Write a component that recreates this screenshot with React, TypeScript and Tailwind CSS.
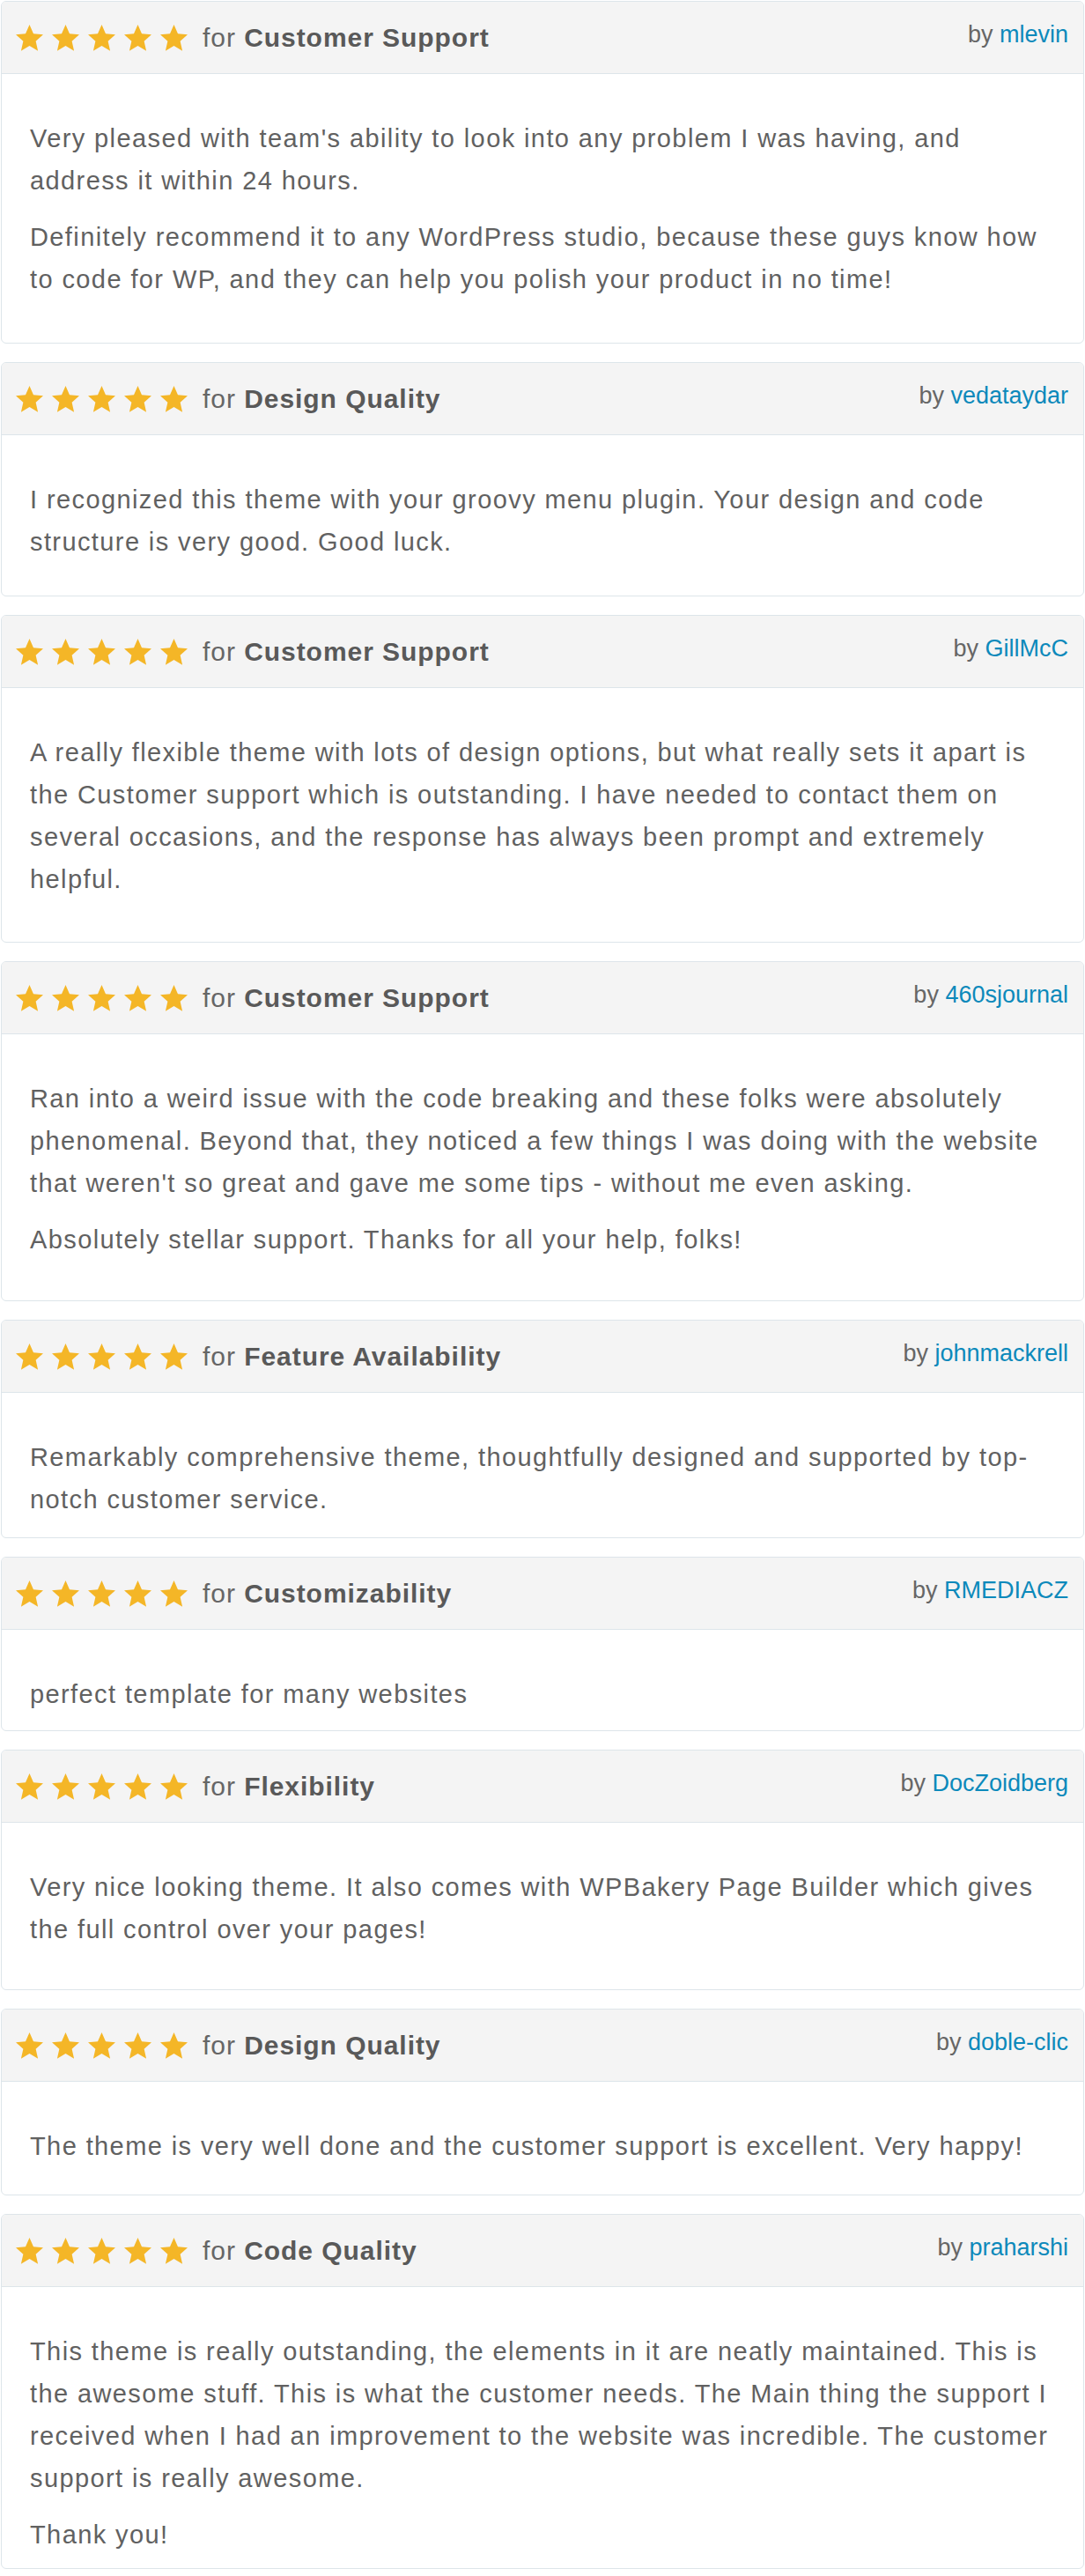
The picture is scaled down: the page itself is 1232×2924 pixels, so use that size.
import React from 'react'

type Review = {
  category: string
  author: string
  paragraphs: string[]
  pb: string
}

const reviews: Review[] = [
  {
    category: 'Customer Support',
    author: 'mlevin',
    paragraphs: [
      "Very pleased with team's ability to look into any problem I was having, and address it within 24 hours.",
      'Definitely recommend it to any WordPress studio, because these guys know how to code for WP, and they can help you polish your product in no time!',
    ],
    pb: 'pb-[48px]',
  },
  {
    category: 'Design Quality',
    author: 'vedataydar',
    paragraphs: [
      'I recognized this theme with your groovy menu plugin. Your design and code structure is very good. Good luck.',
    ],
    pb: 'pb-[37px]',
  },
  {
    category: 'Customer Support',
    author: 'GillMcC',
    paragraphs: [
      'A really flexible theme with lots of design options, but what really sets it apart is the Customer support which is outstanding. I have needed to contact them on several occasions, and the response has always been prompt and extremely helpful.',
    ],
    pb: 'pb-[47px]',
  },
  {
    category: 'Customer Support',
    author: '460sjournal',
    paragraphs: [
      "Ran into a weird issue with the code breaking and these folks were absolutely phenomenal. Beyond that, they noticed a few things I was doing with the website that weren't so great and gave me some tips - without me even asking.",
      'Absolutely stellar support. Thanks for all your help, folks!',
    ],
    pb: 'pb-[45px]',
  },
  {
    category: 'Feature Availability',
    author: 'johnmackrell',
    paragraphs: [
      'Remarkably comprehensive theme, thoughtfully designed and supported by top-notch customer service.',
    ],
    pb: 'pb-[19px]',
  },
  {
    category: 'Customizability',
    author: 'RMEDIACZ',
    paragraphs: ['perfect template for many websites'],
    pb: 'pb-[17px]',
  },
  {
    category: 'Flexibility',
    author: 'DocZoidberg',
    paragraphs: [
      'Very nice looking theme. It also comes with WPBakery Page Builder which gives the full control over your pages!',
    ],
    pb: 'pb-[44px]',
  },
  {
    category: 'Design Quality',
    author: 'doble-clic',
    paragraphs: ['The theme is very well done and the customer support is excellent. Very happy!'],
    pb: 'pb-[31px]',
  },
  {
    category: 'Code Quality',
    author: 'praharshi',
    paragraphs: [
      'This theme is really outstanding, the elements in it are neatly maintained. This is the awesome stuff. This is what the customer needs. The Main thing the support I received when I had an improvement to the website was incredible. The customer support is really awesome.',
      'Thank you!',
    ],
    pb: 'pb-[14px]',
  },
]

function Star() {
  return (
    <svg width="31" height="30" viewBox="2 2 20 19.3" aria-hidden="true">
      <polygon
        fill="#f4b627"
        points="12,2 14.9,8.6 22,9.3 16.6,14 18.2,21.1 12,17.4 5.8,21.1 7.4,14 2,9.3 9.1,8.6"
      />
    </svg>
  )
}

function ReviewCard({ review }: { review: Review }) {
  return (
    <div className="rounded-[6px] border border-[#dde5ea] bg-white overflow-hidden">
      {/* header: stars + category, author on the right */}
      <div className="flex h-[82px] items-center justify-between border-b border-[#dde5ea] bg-[#f4f4f4] pl-[16px] pr-[17px]">
        <div className="flex items-center">
          <div className="flex gap-[10px]">
            <Star />
            <Star />
            <Star />
            <Star />
            <Star />
          </div>
          <span className="ml-[17px] text-[30px] tracking-[0.95px] text-[#666666]">
            for <strong className="font-bold text-[#595959]">{review.category}</strong>
          </span>
        </div>
        <span className="mb-[6px] text-[27px] text-[#666666]">
          by <a href="#" className="text-[#0c89bb]">{review.author}</a>
        </span>
      </div>
      <div className={`pl-[32px] pr-[33px] pt-[49px] ${review.pb}`}>
        {review.paragraphs.map((p, i) => (
          <p
            key={i}
            className={`text-[29px] leading-[48px] tracking-[1.4px] text-[#616161] ${
              i < review.paragraphs.length - 1 ? 'mb-[16px]' : ''
            }`}
          >
            {p}
          </p>
        ))}
      </div>
    </div>
  )
}

export default function App() {
  return (
    <div
      className="flex w-[1232px] flex-col gap-[21px] bg-white px-[1px] pt-[1px]"
      style={{ fontFamily: '"Liberation Sans", Arial, sans-serif' }}
    >
      {reviews.map((r, i) => (
        <ReviewCard key={i} review={r} />
      ))}
    </div>
  )
}
